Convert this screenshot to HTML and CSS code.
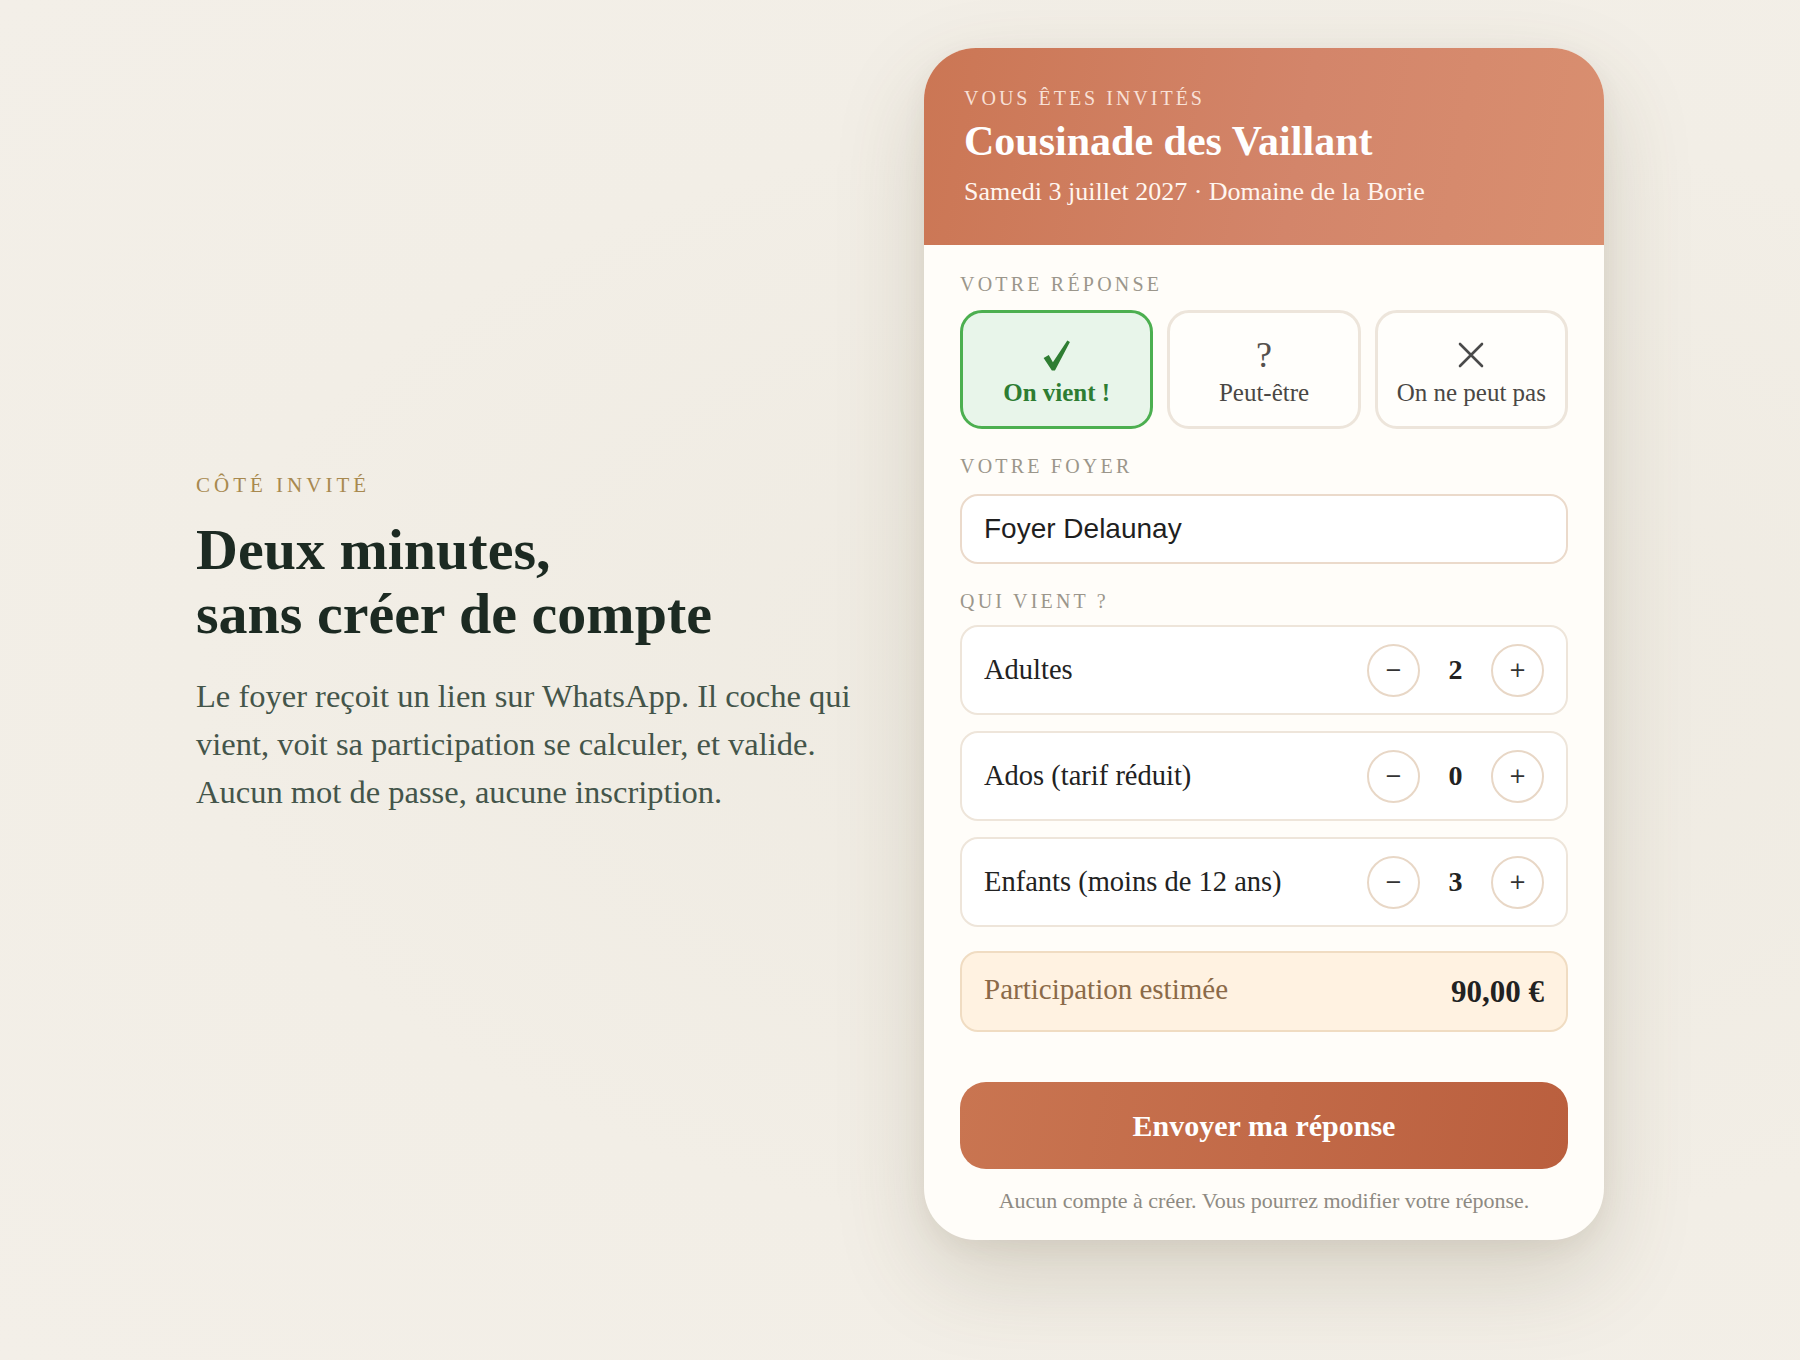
FILE: index.html
```html
<!DOCTYPE html>
<html lang="fr">
<head>
<meta charset="utf-8">
<title>Côté invité</title>
<link rel="stylesheet" href="styles.css">
</head>
<body>
<main class="page">
  <section class="intro">
    <div class="eyebrow">CÔTÉ INVITÉ</div>
    <h1 class="headline">Deux minutes,<br>sans créer de compte</h1>
    <p class="lead">Le foyer reçoit un lien sur WhatsApp. Il coche qui vient, voit sa participation se calculer, et valide. Aucun mot de passe, aucune inscription.</p>
  </section>

  <section class="card">
    <header class="card-head">
      <div class="invite-kicker">VOUS ÊTES INVITÉS</div>
      <h2 class="event-title">Cousinade des Vaillant</h2>
      <div class="event-meta">Samedi 3 juillet 2027 · Domaine de la Borie</div>
    </header>

    <div class="card-body">
      <div class="field-label first">VOTRE RÉPONSE</div>
      <div class="choices">
        <button class="choice selected">
          <span class="choice-icon"><svg class="check" viewBox="0 0 30 32" width="31" height="33"><path d="M2.5 18.5 L7.5 15.5 L11.5 22.5 L25.5 1.5 L28 3 L13.5 30.5 L10.5 30.5 Z" fill="#2e7d32"/></svg></span>
          <span class="choice-text">On vient !</span>
        </button>
        <button class="choice">
          <span class="choice-icon">?</span>
          <span class="choice-text">Peut-être</span>
        </button>
        <button class="choice">
          <span class="choice-icon"><svg class="cross" viewBox="0 0 26 26" width="26" height="26"><path d="M2 2 L24 24 M24 2 L2 24" stroke="#4a4a4a" stroke-width="2.6" stroke-linecap="round" fill="none"/></svg></span>
          <span class="choice-text">On ne peut pas</span>
        </button>
      </div>

      <div class="field-label">VOTRE FOYER</div>
      <div class="text-input">Foyer Delaunay</div>

      <div class="field-label">QUI VIENT ?</div>
      <div class="counters">
        <div class="counter-row">
          <span class="counter-name">Adultes</span>
          <div class="stepper">
            <span class="step-btn">−</span>
            <span class="step-value">2</span>
            <span class="step-btn">+</span>
          </div>
        </div>
        <div class="counter-row">
          <span class="counter-name">Ados (tarif réduit)</span>
          <div class="stepper">
            <span class="step-btn">−</span>
            <span class="step-value">0</span>
            <span class="step-btn">+</span>
          </div>
        </div>
        <div class="counter-row">
          <span class="counter-name">Enfants (moins de 12 ans)</span>
          <div class="stepper">
            <span class="step-btn">−</span>
            <span class="step-value">3</span>
            <span class="step-btn">+</span>
          </div>
        </div>
      </div>

      <div class="estimate">
        <span class="estimate-label">Participation estimée</span>
        <span class="estimate-value">90,00 €</span>
      </div>

      <button class="submit">Envoyer ma réponse</button>
      <p class="footnote">Aucun compte à créer. Vous pourrez modifier votre réponse.</p>
    </div>
  </section>
</main>
</body>
</html>
```

FILE: styles.css
```css
* { box-sizing: border-box; }

html, body {
  margin: 0;
  padding: 0;
}

body {
  width: 1800px;
  height: 1360px;
  background: radial-gradient(ellipse at 70% 50%, #eeeae1 0%, #f2eee6 60%, #f3efe8 100%);
  font-family: "Liberation Serif", "DejaVu Serif", serif;
  color: #1d2b23;
  overflow: hidden;
}

.page {
  height: 1360px;
  padding-bottom: 72px;
  display: grid;
  grid-template-columns: 664px 680px;
  column-gap: 64px;
  justify-content: center;
  align-items: center;
}

/* ---------- Left intro ---------- */
.eyebrow {
  font-size: 21px;
  letter-spacing: 4px;
  color: #a8894f;
  line-height: 24px;
}

.headline {
  margin: 21px 0 0;
  font-size: 58px;
  line-height: 64px;
  font-weight: 700;
  color: #1c2a22;
}

.lead {
  margin: 26px 0 0;
  font-size: 32.5px;
  line-height: 48px;
  color: #44554a;
}

/* ---------- Card ---------- */
.card {
  width: 680px;
  height: 1192px;
  background: #fffdf9;
  border-radius: 52px;
  overflow: hidden;
  box-shadow: 0 36px 90px rgba(90, 75, 45, 0.18), 0 8px 24px rgba(90, 75, 45, 0.06);
  display: flex;
  flex-direction: column;
}

.card-head {
  height: 197px;
  padding: 40px 40px 0;
  background: linear-gradient(100deg, #cb7654 0%, #d3856a 55%, #d98f70 100%);
  color: #fff;
}

.invite-kicker {
  font-size: 20px;
  line-height: 20px;
  letter-spacing: 3px;
  color: rgba(255, 240, 232, 0.88);
}

.event-title {
  margin: 10px 0 0;
  font-size: 42px;
  line-height: 46px;
  font-weight: 700;
  color: #fff;
}

.event-meta {
  margin-top: 13px;
  font-size: 26px;
  line-height: 30px;
  color: #fff6f0;
}

.card-body {
  padding: 0 36px;
  display: flex;
  flex-direction: column;
}

.field-label {
  margin-top: 27px;
  font-size: 20px;
  line-height: 20px;
  letter-spacing: 3.2px;
  color: #9b968b;
}

.field-label.first { margin-top: 29px; }

/* choices */
.choices {
  margin-top: 16px;
  display: grid;
  grid-template-columns: repeat(3, 1fr);
  column-gap: 14px;
}

.choice {
  height: 119px;
  border: 3px solid #ede5db;
  border-radius: 22px;
  background: #fffefb;
  display: flex;
  flex-direction: column;
  align-items: center;
  padding: 0;
  font-family: inherit;
  color: #4a4744;
}

.choice-icon {
  height: 44px;
  margin-top: 20px;
  display: flex;
  align-items: center;
  justify-content: center;
  font-size: 36px;
  line-height: 44px;
  color: #55514d;
}

.check, .cross { display: block; }

.choice-text {
  margin-top: 1px;
  font-size: 25px;
  line-height: 30px;
}

.choice.selected {
  border-color: #4caf50;
  background: #e8f5ea;
  color: #2e7d32;
}

.choice.selected .choice-text { font-weight: 700; }

/* input */
.text-input {
  margin-top: 18px;
  height: 70px;
  border: 2px solid #ebdacb;
  border-radius: 18px;
  background: #fff;
  padding: 0 22px;
  display: flex;
  align-items: center;
  font-family: "Liberation Sans", Arial, sans-serif;
  font-size: 28px;
  color: #1f1f1f;
}

/* counters */
.counters {
  margin-top: 14px;
  display: flex;
  flex-direction: column;
  gap: 16px;
}

.counter-row {
  height: 90px;
  border: 2px solid #eee5da;
  border-radius: 18px;
  background: #fff;
  padding: 0 22px 0 22px;
  display: flex;
  align-items: center;
  justify-content: space-between;
}

.counter-name {
  font-size: 28.5px;
  color: #222;
}

.stepper {
  display: flex;
  align-items: center;
}

.step-btn {
  width: 53px;
  height: 53px;
  border: 2px solid #e8d7c6;
  border-radius: 50%;
  display: flex;
  align-items: center;
  justify-content: center;
  font-family: "DejaVu Sans", sans-serif;
  font-size: 21px;
  color: #333;
  background: #fff;
}

.step-value {
  width: 71px;
  text-align: center;
  font-size: 28px;
  font-weight: 700;
  color: #222;
}

/* estimate */
.estimate {
  margin-top: 24px;
  height: 81px;
  border: 2px solid #f0dcc2;
  border-radius: 18px;
  background: #fff2e1;
  padding: 0 22px 4px;
  display: flex;
  align-items: center;
  justify-content: space-between;
}

.estimate-label {
  font-size: 29px;
  color: #8b6a48;
}

.estimate-value {
  font-size: 31px;
  font-weight: 700;
  color: #222;
  margin-top: 4px;
}

/* submit */
.submit {
  margin-top: 50px;
  height: 87px;
  border: none;
  border-radius: 26px;
  background: linear-gradient(100deg, #c97551 0%, #c26a48 50%, #ba5f3e 100%);
  color: #fff;
  font-family: inherit;
  font-size: 30px;
  font-weight: 700;
  padding: 0;
}

.footnote {
  margin: 20px 0 0;
  text-align: center;
  font-size: 22px;
  line-height: 24px;
  color: #8e8a82;
}
```
